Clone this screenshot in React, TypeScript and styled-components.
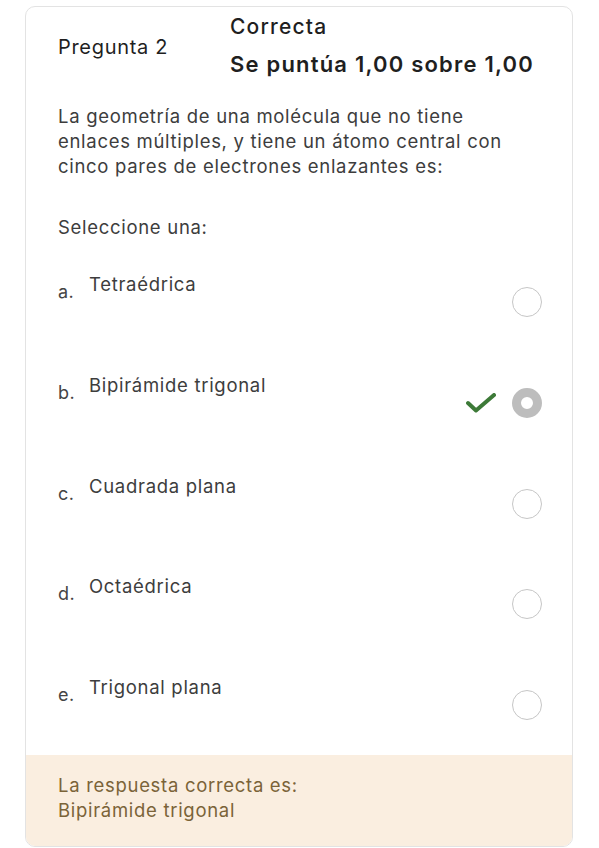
import * as React from 'react';
import styled, { createGlobalStyle } from 'styled-components';

const GlobalStyle = createGlobalStyle`
body{
  margin:0;
  background:#ffffff;
  font-family:Inter,"Noto Sans",sans-serif;
}
`;

const Card = styled.div`
margin:6px 26px 0 25px;
height:841px;
box-sizing:border-box;
border:1.5px solid #e3e3e3;
border-radius:10px;
overflow:hidden;
display:flex;
flex-direction:column;
`;

const Header = styled.div`
display:flex;
align-items:center;
padding:7px 0 0 32px;
`;

const QNumber = styled.div`
width:172px;
padding-top:3px;
font-size:20px;
letter-spacing:0.7px;
color:#1f1f1f;
`;

const Status = styled.div`
display:flex;
flex-direction:column;
gap:11px;
color:#1f1f1f;
`;

const StatusLine = styled.div<{ $strong?: boolean }>`
font-size:${p => (p.$strong ? '22px' : '21px')};
font-weight:${p => (p.$strong ? 600 : 500)};
letter-spacing:${p => (p.$strong ? '1.2px' : '1.2px')};
line-height:26px;
`;

const Body = styled.div`
flex:1;
padding:27px 30px 25px 32px;
display:flex;
flex-direction:column;
color:#3d3d3d;
font-size:18.5px;
letter-spacing:0.7px;
line-height:25px;
`;

const Question = styled.p`
margin:0 0 36px 0;
`;

const Prompt = styled.div`
margin-bottom:32px;
`;

const Options = styled.div`
display:flex;
flex-direction:column;
gap:54.25px;
`;

const OptionRow = styled.div`
display:flex;
align-items:flex-start;
height:46.5px;
`;

const Letter = styled.span`
width:31px;
padding-top:7px;
font-size:18px;
letter-spacing:0.5px;
color:#444;
`;

const Label = styled.span`
flex:1;
`;

const Mark = styled.div`
display:flex;
align-items:center;
gap:16px;
margin-top:15px;
`;

const Radio = styled.span<{ $checked?: boolean }>`
box-sizing:border-box;
width:30px;
height:30px;
border-radius:50%;
border:${p => (p.$checked ? '9px solid #bdbdbd' : '1.5px solid #c6c6c6')};
background:#fff;
`;

const Feedback = styled.div`
background:#faeee0;
padding:18px 32px 0 32px;
height:91px;
box-sizing:border-box;
color:#7a6338;
font-size:18.5px;
letter-spacing:0.7px;
line-height:25px;
`;

const Check = () => (
  <svg width="30" height="20" viewBox="0 0 30 20">
    <path d="M2 10 L10 17.5 L28 2" fill="none" stroke="#3d7a38" strokeWidth="4" strokeLinecap="round" strokeLinejoin="round" />
  </svg>
);

const options = [
  { l: 'a.', t: 'Tetraédrica' },
  { l: 'b.', t: 'Bipirámide trigonal', checked: true },
  { l: 'c.', t: 'Cuadrada plana' },
  { l: 'd.', t: 'Octaédrica' },
  { l: 'e.', t: 'Trigonal plana' },
];

export default function App() {
  return (
    <>
      <GlobalStyle />
      <Card>
        <Header>
          <QNumber>Pregunta 2</QNumber>
          <Status>
            <StatusLine>Correcta</StatusLine>
            <StatusLine $strong>Se puntúa 1,00 sobre 1,00</StatusLine>
          </Status>
        </Header>
        <Body>
          <Question>
            La geometría de una molécula que no tiene enlaces múltiples, y tiene un átomo central con cinco pares de electrones enlazantes es:
          </Question>
          <Prompt>Seleccione una:</Prompt>
          <Options>
            {options.map(o => (
              <OptionRow key={o.l}>
                <Letter>{o.l}</Letter>
                <Label>{o.t}</Label>
                <Mark>
                  {o.checked && <Check />}
                  <Radio $checked={o.checked} />
                </Mark>
              </OptionRow>
            ))}
          </Options>
        </Body>
        <Feedback>
          La respuesta correcta es:
          <br />
          Bipirámide trigonal
        </Feedback>
      </Card>
    </>
  );
}
